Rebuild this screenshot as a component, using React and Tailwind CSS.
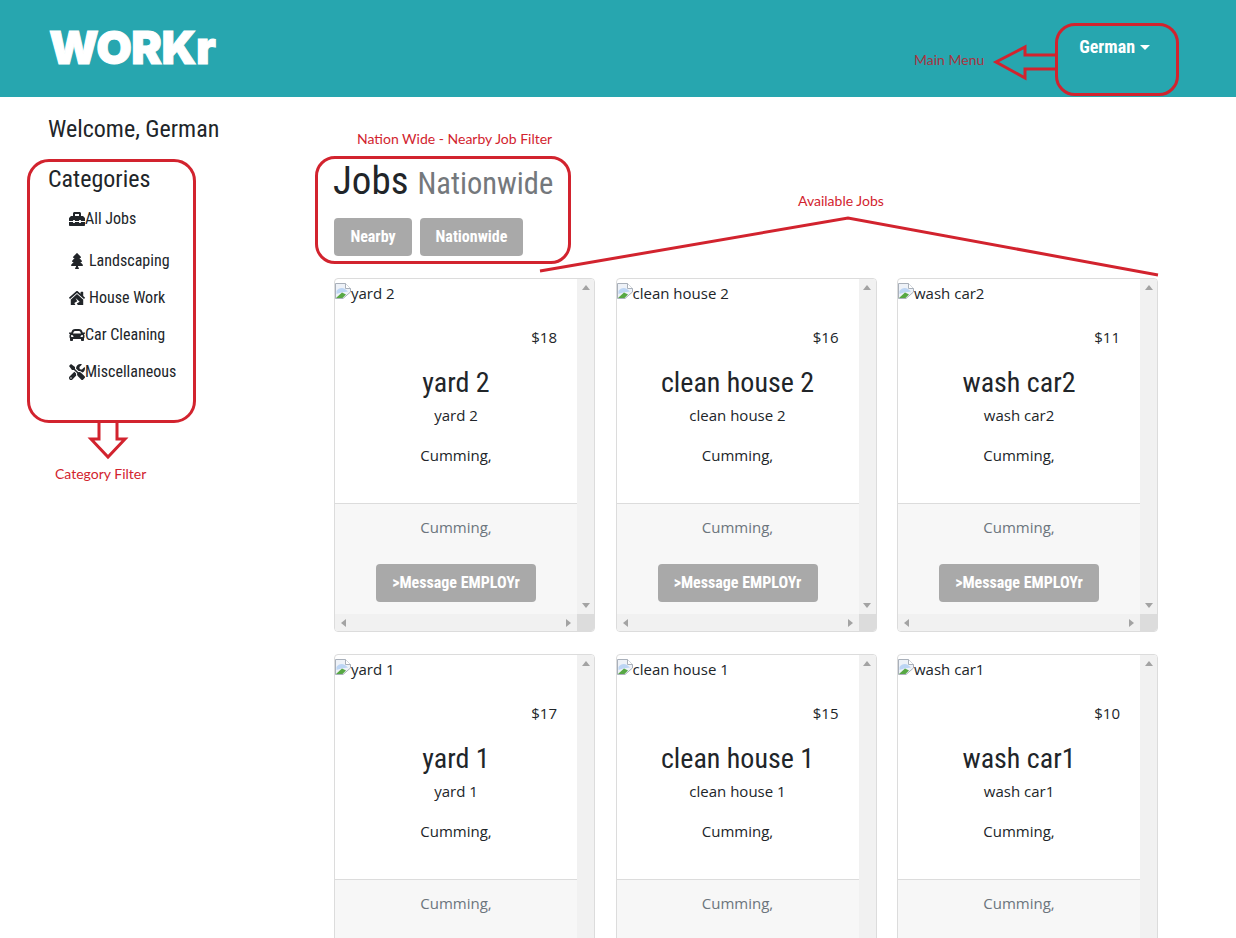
import { FaToolbox, FaTree, FaHouseDamage, FaCar, FaTools } from "react-icons/fa";

const HEAD = "font-['Liberation_Sans_Narrow','Roboto_Condensed','Liberation_Sans',sans-serif]";
const RED = "#d2232e";

const CATEGORIES = [
  { label: "All Jobs", Icon: FaToolbox, row: "h-[23px] mb-[19px]", gap: "ml-0" },
  { label: "Landscaping", Icon: FaTree, row: "h-[23px] mb-[14px]", gap: "ml-[4px]" },
  { label: "House Work", Icon: FaHouseDamage, row: "h-[23px] mb-[14px]", gap: "ml-[4px]" },
  { label: "Car Cleaning", Icon: FaCar, row: "h-[23px] mb-[14px]", gap: "ml-0" },
  { label: "Miscellaneous", Icon: FaTools, row: "h-[23px]", gap: "ml-0" },
];

const JOBS = [
  { title: "yard 2", price: "$18" },
  { title: "clean house 2", price: "$16" },
  { title: "wash car2", price: "$11" },
  { title: "yard 1", price: "$17" },
  { title: "clean house 1", price: "$15" },
  { title: "wash car1", price: "$10" },
];

function BrokenImage() {
  return (
    <svg width="16" height="16" viewBox="0 0 16 16" className="shrink-0 -mt-[5px]">
      <path d="M0.5 0.5H10.5L15.5 5.5V9L8 15.5H0.5Z" fill="#eef2f8" stroke="#a9b0ba" />
      <path d="M10.5 0.5V5.5H15.5" fill="#fff" stroke="#a9b0ba" />
      <path d="M1.5 8C3.5 5 7 4 10 6L13 8.5L6 9.5L1.5 11Z" fill="#bcd5f4" />
      <path d="M1 15L7 9.5L11 11.5L7.5 15Z" fill="#57a843" />
    </svg>
  );
}

function ScrollArrow({ dir }) {
  const cls = {
    up: "border-x-[4px] border-b-[5px] border-x-transparent border-b-[#a3a3a3]",
    down: "border-x-[4px] border-t-[5px] border-x-transparent border-t-[#a3a3a3]",
    left: "border-y-[4px] border-r-[5px] border-y-transparent border-r-[#a3a3a3]",
    right: "border-y-[4px] border-l-[5px] border-y-transparent border-l-[#a3a3a3]",
  }[dir];
  return <span className={`w-0 h-0 ${cls}`} />;
}

function JobCard({ job }) {
  return (
    <div className="w-[261px] h-[354px] border border-[#dcdcdc] rounded-[4px] flex flex-col overflow-hidden bg-white shrink-0">
      <div className="flex flex-1 min-h-0">
        <div className="flex-1 min-w-0 flex flex-col">
          <div className="h-[225px] border-b border-[#dcdcdc] flex flex-col">
            <div className="flex items-center text-[15px] leading-[22px] h-[22px] mt-[3px] text-[#212529]">
              <BrokenImage />
              <span>{job.title}</span>
            </div>
            <div className="text-right pr-[20px] mt-[22px] text-[15px] leading-[22px] text-[#212529]">{job.price}</div>
            <h5 className={`${HEAD} text-center text-[28px] leading-[32px] mt-[19px] text-[#212529]`}>{job.title}</h5>
            <p className="text-center text-[15px] leading-[22px] mt-[5px] text-[#212529]">{job.title}</p>
            <p className="text-center text-[15px] leading-[22px] mt-[18px] text-[#212529]">Cumming,</p>
          </div>
          <div className="flex-1 bg-[#f7f7f7] flex flex-col items-center">
            <p className="text-[15px] leading-[22px] mt-[12px] text-[#6c757d]">Cumming,</p>
            <button className={`${HEAD} mt-[26px] w-[160px] h-[38px] rounded-[4px] bg-[#a9a9a9] text-white font-bold text-[16px]`}>
              &gt;Message EMPLOYr
            </button>
          </div>
        </div>
        <div className="w-[17px] bg-[#f1f1f1] flex flex-col items-center justify-between py-[6px]">
          <ScrollArrow dir="up" />
          <ScrollArrow dir="down" />
        </div>
      </div>
      <div className="h-[17px] flex">
        <div className="flex-1 bg-[#f1f1f1] flex items-center justify-between px-[6px]">
          <ScrollArrow dir="left" />
          <ScrollArrow dir="right" />
        </div>
        <div className="w-[17px] bg-[#dcdcdc]" />
      </div>
    </div>
  );
}

function Annotations() {
  const label = "absolute font-['Lato',sans-serif] text-[14px] leading-[16px] whitespace-nowrap";
  const box = "absolute border-[3px] border-[#d2232e]";
  return (
    <>
      <div className={`${box} left-[27px] top-[159px] w-[169px] h-[264px] rounded-[22px]`} />
      <div className={`${box} left-[315px] top-[156px] w-[256px] h-[108px] rounded-[20px]`} />
      <div className={`${box} left-[1055px] top-[23px] w-[124px] h-[73px] rounded-[20px]`} />
      <svg className="absolute left-0 top-0 pointer-events-none" width="1236" height="938" fill="none" stroke={RED} strokeWidth="3">
        <path d="M540 271L848 218L1158 275" />
        <path d="M1056 55H1025V47L996 62L1025 78V69H1056" />
        <path d="M99 422V439H91L108 457L125 439H117V422" />
      </svg>
      <span className={`${label} left-[914px] top-[52px] text-[#a8343f]`}>Main Menu</span>
      <span className={`${label} left-[357px] top-[131px] text-[#d2232e]`}>Nation Wide - Nearby Job Filter</span>
      <span className={`${label} left-[798px] top-[193px] text-[#d2232e]`}>Available Jobs</span>
      <span className={`${label} left-[55px] top-[466px] text-[#d2232e]`}>Category Filter</span>
    </>
  );
}

export default function App() {
  return (
    <div className="relative h-[938px] overflow-hidden bg-white font-['Open_Sans',sans-serif] text-[#212529]">
      {/* Navbar */}
      <header className="h-[97px] bg-[#27a6af] flex justify-between pl-[49px] pr-[86px]">
        <div className="font-['Inter',sans-serif] font-black text-white text-[46px] leading-[46px] mt-[24px] tracking-[-0.5px] [-webkit-text-stroke:1px_white]">WORKr</div>
        <div className={`${HEAD} text-white font-bold text-[18px] leading-[24px] mt-[35px] flex items-center h-[24px]`}>
          German
          <span className="ml-[5px] w-0 h-0 border-x-[5px] border-t-[5px] border-x-transparent border-t-white" />
        </div>
      </header>

      <div className="flex">
        {/* Sidebar */}
        <aside className={`${HEAD} w-[334px] shrink-0 pl-[48px] text-[#212529]`}>
          <h4 className="text-[24px] leading-[30px] mt-[17px]">Welcome, German</h4>
          <h4 className="text-[24px] leading-[30px] mt-[20px]">Categories</h4>
          <ul className="mt-[13px] pl-[20px] text-[16px] leading-[23px]">
            {CATEGORIES.map(({ label, Icon, row, gap }) => (
              <li key={label} className={`flex items-center ${row}`}>
                <span className="flex justify-center w-[17px]">
                  <Icon className="text-[16px]" />
                </span>
                <span className={gap}>{label}</span>
              </li>
            ))}
          </ul>
        </aside>

        {/* Main */}
        <main className="flex-1 min-w-0">
          <h1 className={`${HEAD} text-[39px] leading-[48px] mt-[60px] -ml-px whitespace-nowrap`}>
            Jobs <span className="text-[30.5px] text-[#74787c]">Nationwide</span>
          </h1>
          <div className={`${HEAD} flex gap-[8px] mt-[10px]`}>
            <button className="w-[78px] h-[38px] rounded-[4px] bg-[#a9a9a9] text-white font-bold text-[16px]">Nearby</button>
            <button className="w-[103px] h-[38px] rounded-[4px] bg-[#a9a9a9] text-white font-bold text-[16px]">Nationwide</button>
          </div>
          <div className="grid grid-cols-[261px_261px_261px] gap-x-[20.5px] gap-y-[22px] mt-[22px]">
            {JOBS.map((job) => (
              <JobCard key={job.title} job={job} />
            ))}
          </div>
        </main>
      </div>

      <Annotations />
    </div>
  );
}
